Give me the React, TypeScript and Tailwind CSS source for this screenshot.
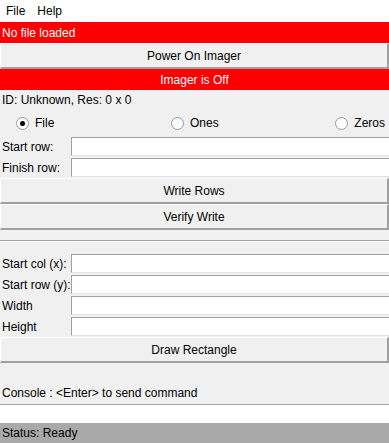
import React from "react";

const font = { fontFamily: '"Liberation Sans", "Segoe UI", sans-serif' };

function Button({ label }: { label: string }) {
  return (
    <div className="h-[26px] flex items-center justify-center bg-[#f0f0f0] border-t border-l border-t-white border-l-white border-b-2 border-r-2 border-b-[#a0a0a0] border-r-[#a0a0a0] text-[12px] text-black">
      {label}
    </div>
  );
}

function Field({ label }: { label: string }) {
  return (
    <div className="h-[21px] flex items-center">
      <div className="w-[71px] shrink-0 pl-[2px] text-[12px] text-black whitespace-nowrap">{label}</div>
      <div className="flex-1 h-[19px] bg-white border-t border-l border-t-[#a0a0a0] border-l-[#a0a0a0] border-b border-b-[#e3e3e3]" />
    </div>
  );
}

function Radio({ label, checked }: { label: string; checked?: boolean }) {
  return (
    <div className="flex items-center gap-[6px]">
      <div className="w-[13px] h-[13px] rounded-full bg-white border border-[#9a9a9a] flex items-center justify-center">
        {checked && <div className="w-[5px] h-[5px] rounded-full bg-black" />}
      </div>
      <span className="text-[12px] text-black">{label}</span>
    </div>
  );
}

export default function App() {
  return (
    <div className="w-[389px] h-[443px] bg-[#f0f0f0] flex flex-col overflow-hidden" style={font}>
      <div className="h-[22px] bg-white flex items-center gap-[12px] pl-[6px] text-[12px] text-black">
        <span>File</span>
        <span>Help</span>
      </div>
      <div className="h-[21px] bg-[#ff0000] text-white text-[12px] flex items-center pl-[2px]">No file loaded</div>
      <Button label="Power On Imager" />
      <div className="h-[21px] bg-[#ff0000] text-white text-[12px] flex items-center justify-center">Imager is Off</div>
      <div className="h-[20px] flex items-center pl-[2px] text-[12px] text-black">ID: Unknown, Res: 0 x 0</div>
      <div className="h-[26px] flex items-center justify-between pl-[16px] pr-[4px]">
        <Radio label="File" checked />
        <Radio label="Ones" />
        <Radio label="Zeros" />
      </div>
      <Field label="Start row:" />
      <Field label="Finish row:" />
      <Button label="Write Rows" />
      <Button label="Verify Write" />
      <div className="h-[10px]" />
      <div className="h-[2px] border-t border-t-[#a0a0a0] border-b border-b-white" />
      <div className="h-[11px]" />
      <Field label="Start col (x):" />
      <Field label="Start row (y):" />
      <Field label="Width" />
      <Field label="Height" />
      <Button label="Draw Rectangle" />
      <div className="h-[41px] flex items-end pb-[2px] pl-[2px] text-[12px] text-black">
        Console : &lt;Enter&gt; to send command
      </div>
      <div className="h-[19px] bg-white border-t border-t-[#a0a0a0]" />
      <div className="flex-1 bg-[#a9a9a9] flex items-center pl-[2px] text-[12px] text-black">Status: Ready</div>
    </div>
  );
}
